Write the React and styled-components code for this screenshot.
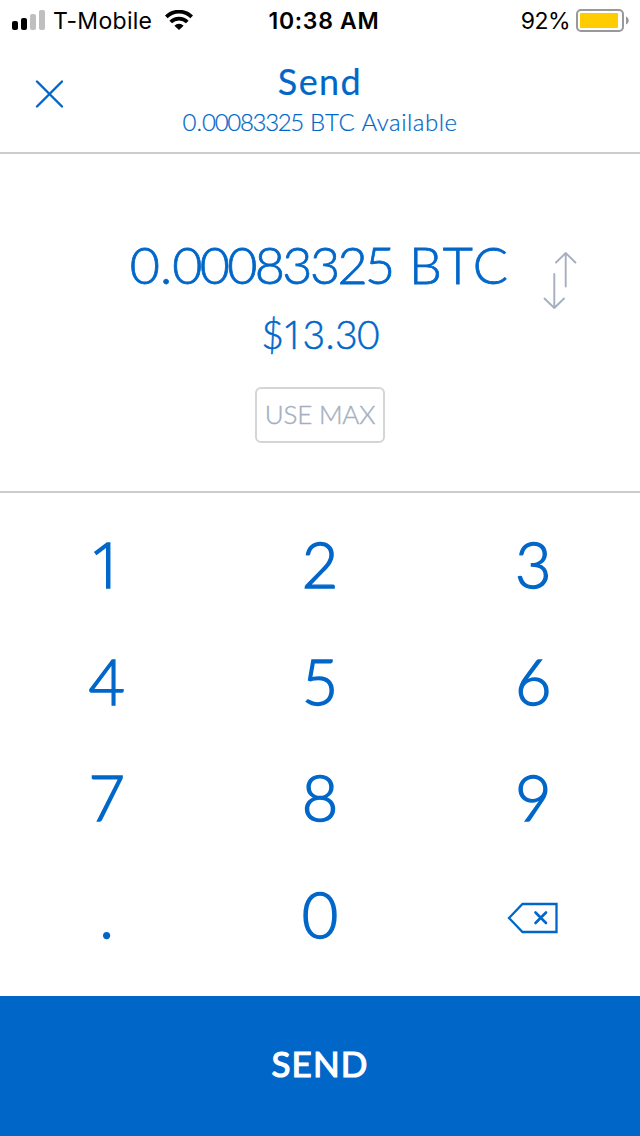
import React from "react";

import styled, { createGlobalStyle } from "styled-components";

const GlobalStyle = createGlobalStyle`
  * {
    box-sizing: border-box;
  }

  body {
    margin: 0;
    background-color: #ffffff;
  }

  button {
    margin: 0;
    padding: 0;
    border: none;
    background: none;
    color: inherit;
    font: inherit;
  }
`;

const Screen = styled.div`
  display: flex;
  flex-direction: column;
  width: 640px;
  height: 1136px;
  background-color: #ffffff;
  color: #0067c9;
  font-family: Lato, "Open Sans", sans-serif;
`;

const StatusBar = styled.div`
  display: grid;
  grid-template-columns: 1fr auto 1fr;
  align-items: center;
  height: 40px;
  padding: 0 11px 0 12px;
  color: #000000;
  font-family: Inter, sans-serif;
  font-size: 23px;
  line-height: 40px;
`;

const StatusGroup = styled.div`
  display: flex;
  align-items: center;
  justify-content: ${({ $end }) => ($end ? "flex-end" : "flex-start")};

  svg {
    margin-bottom: 1px;
  }
`;

const Carrier = styled.span`
  margin: 0 13px 0 7px;
  padding-top: 1px;
  letter-spacing: 0.3px;
`;

const Clock = styled.span`
  padding: 1px 0 0 7px;
  font-weight: 600;
  letter-spacing: 0.7px;
`;

const Percent = styled.span`
  margin-right: 6px;
  padding-top: 1px;
  letter-spacing: -0.5px;
`;

const Header = styled.header`
  display: grid;
  grid-template-columns: 98px 1fr 98px;
  height: 114px;
  border-bottom: 2px solid #cccccc;
`;

const CloseButton = styled.button`
  display: flex;
  align-items: center;
  justify-content: center;
  height: 108px;
`;

const Titles = styled.div`
  display: flex;
  flex-direction: column;
  align-items: center;
  padding-top: 19px;
`;

const Title = styled.h1`
  margin: 0;
  font-size: 36px;
  font-weight: 400;
  line-height: 44px;
  letter-spacing: 1.4px;
  -webkit-text-stroke: 0.2px currentColor;
`;

const Text = styled.span`
  letter-spacing: ${({ $spacing }) => $spacing}px;
`;

const Available = styled.div`
  font-size: 24px;
  font-weight: 300;
  line-height: 38px;
  white-space: nowrap;
  -webkit-text-stroke: 0.2px currentColor;
`;

const AmountPanel = styled.section`
  display: grid;
  grid-template-columns: 1fr 380px 1fr;
  height: 339px;
  border-bottom: 2px solid #cccccc;
`;

const Amounts = styled.div`
  display: flex;
  flex-direction: column;
  align-items: center;
  padding-top: 75px;
  white-space: nowrap;
`;

const CryptoAmount = styled.div`
  font-size: 52px;
  font-weight: 300;
  line-height: 70px;
  -webkit-text-stroke: 0.8px currentColor;
`;

const FiatAmount = styled.div`
  margin-top: 2px;
  font-size: 39px;
  font-weight: 300;
  line-height: 66px;
  -webkit-text-stroke: 0.5px currentColor;
`;

const One = styled.span`
  font-family: "Open Sans", sans-serif;
  font-weight: 300;
`;

const MaxButton = styled.button`
  width: 130px;
  height: 56px;
  margin-top: 20px;
  padding-bottom: 3px;
  border: 2px solid #d5d5d5;
  border-radius: 6px;
  color: #a3afbf;
  font-size: 26px;
  font-weight: 300;
  letter-spacing: -0.2px;
  -webkit-text-stroke: 0.4px currentColor;
`;

const SwapButton = styled.button`
  display: flex;
  align-items: flex-start;
  padding: 97px 0 0 33px;
`;

const Keypad = styled.div`
  display: grid;
  grid-template-columns: repeat(3, 1fr);
  grid-template-rows: repeat(4, 116.5px);
  flex: 1;
  padding-top: 13px;
`;

const Key = styled.button`
  display: flex;
  align-items: center;
  justify-content: center;
  font-size: 63px;
  font-weight: 300;
  line-height: 116px;
  -webkit-text-stroke: 1.4px currentColor;

  svg {
    margin-top: 9px;
  }
`;

const SendButton = styled.button`
  height: 140px;
  padding-bottom: 6px;
  background-color: #0067c9;
  color: #ffffff;
  font-size: 35px;
  font-weight: 400;
  letter-spacing: 1.1px;
  -webkit-text-stroke: 1.2px currentColor;
`;

const keys = ["1", "2", "3", "4", "5", "6", "7", "8", "9", ".", "0"];

function SignalIcon() {
  return (
    <svg width="34" height="20" viewBox="0 0 34 20">
      <rect x="0" y="11" width="6" height="9" rx="2" fill="#000" />
      <rect x="9" y="8" width="6" height="12" rx="2" fill="#000" />
      <rect x="18" y="4" width="6" height="16" rx="2" fill="#bfbfbf" />
      <rect x="27" y="0" width="6" height="20" rx="2" fill="#bfbfbf" />
    </svg>
  );
}

function WifiIcon() {
  return (
    <svg width="28" height="20" viewBox="0 0 28 20" fill="none" stroke="#000" strokeWidth="3.8">
      <path d="M1.3 6.9a18 18 0 0 1 25.4 0" />
      <path d="M5.7 12a11.8 11.8 0 0 1 16.6 0" />
      <path d="M9.4 15.7a6.4 6.4 0 0 1 9.2 0L14 20z" fill="#000" stroke="none" />
    </svg>
  );
}

function BatteryIcon() {
  return (
    <svg width="53" height="24" viewBox="0 0 53 24">
      <rect x="1" y="2" width="46" height="21" rx="4" fill="#fff" stroke="#999" strokeWidth="2" />
      <rect x="4" y="5" width="38" height="15" rx="1" fill="#ffcc00" />
      <path d="M50 8.5c3.6 1.2 3.6 6.8 0 8z" fill="#999" />
    </svg>
  );
}

function CloseIcon() {
  return (
    <svg width="28" height="28" viewBox="0 0 28 28" stroke="#0067c9" strokeWidth="2.4" strokeLinecap="round">
      <path d="M2 1.5l25 25M27 1.5l-25 25" />
    </svg>
  );
}

function SwapIcon() {
  return (
    <svg
      width="34"
      height="60"
      viewBox="0 0 34 60"
      fill="none"
      stroke="#a5afbf"
      strokeWidth="1.9"
      strokeLinecap="round"
      strokeLinejoin="round"
    >
      <path d="M22.7 35.5V2M13 11.5L22.7 2l9.700 9.500" />
      <path d="M11.3 23v34M1.5 47.5L11.3 57l9.700-9.500" />
    </svg>
  );
}

function BackspaceIcon() {
  return (
    <svg width="52" height="32" viewBox="0 0 52 32" fill="none" stroke="#0067c9" strokeWidth="2.3">
      <path d="M15.5 2h34v28h-34L2 16z" />
      <path d="M28.500 10.500l10.500 10.500M39 10.500L28.500 21" strokeLinecap="round" strokeWidth="2.6" />
    </svg>
  );
}

function App() {
  return (
    <Screen>
      <GlobalStyle />
      <StatusBar>
        <StatusGroup>
          <SignalIcon />
          <Carrier>T-Mobile</Carrier>
          <WifiIcon />
        </StatusGroup>
        <Clock>10:38 AM</Clock>
        <StatusGroup $end>
          <Percent>92%</Percent>
          <BatteryIcon />
        </StatusGroup>
      </StatusBar>
      <Header>
        <CloseButton aria-label="Close">
          <CloseIcon />
        </CloseButton>
        <Titles>
          <Title>Send</Title>
          <Available>
            <Text $spacing={0}>0.</Text>
            <Text $spacing={-1.3}>00083325</Text>
            <Text $spacing={0.5}> BTC Available</Text>
          </Available>
        </Titles>
      </Header>
      <AmountPanel>
        <div />
        <Amounts>
          <CryptoAmount>
            <Text $spacing={0}>0.</Text>
            <Text $spacing={-2.6}>00083325</Text>
            <Text $spacing={2.2}> BTC</Text>
          </CryptoAmount>
          <FiatAmount>
            <Text $spacing={-1.8}>
              $<One>1</One>
            </Text>
            <Text $spacing={0.4}>3.</Text>
            <Text $spacing={-0.8}>30</Text>
          </FiatAmount>
          <MaxButton>USE MAX</MaxButton>
        </Amounts>
        <SwapButton aria-label="Swap currency">
          <SwapIcon />
        </SwapButton>
      </AmountPanel>
      <Keypad>
        {keys.map((key) => (
          <Key key={key}>{key === "1" ? <One>{key}</One> : key}</Key>
        ))}
        <Key aria-label="Delete">
          <BackspaceIcon />
        </Key>
      </Keypad>
      <SendButton>SEND</SendButton>
    </Screen>
  );
}

export default App;
